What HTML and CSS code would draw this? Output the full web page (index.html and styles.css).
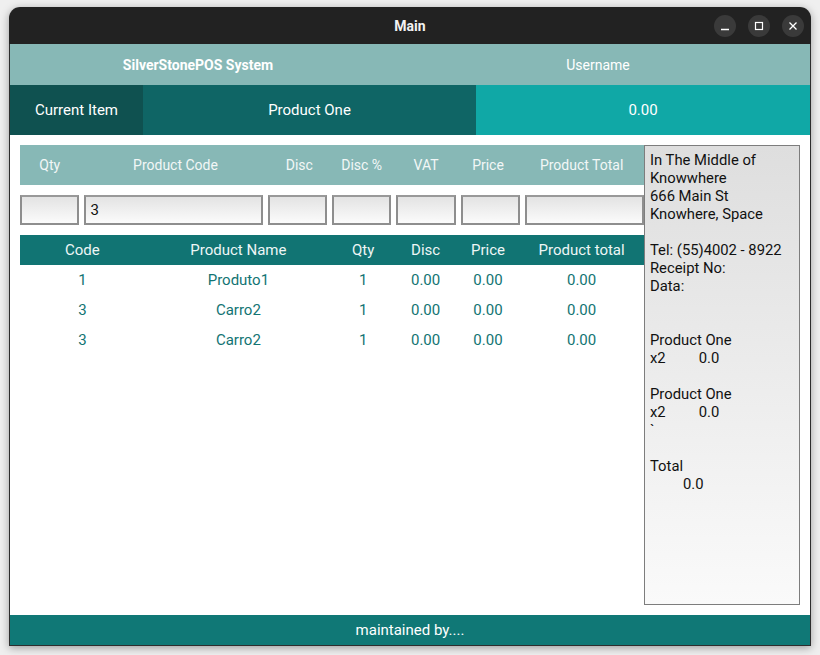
FILE: index.html
```html
<!DOCTYPE html>
<html>
<head>
<meta charset="utf-8">
<title>Main</title>
<link rel="stylesheet" href="styles.css">
</head>
<body>
<div class="window">
  <div class="titlebar">
    <span class="title">Main</span>
    <div class="controls">
      <span class="ctl"><svg width="10" height="10" viewBox="0 0 10 10"><path d="M1 8.5h8" stroke="#fff" stroke-width="1.3"/></svg></span>
      <span class="ctl"><svg width="10" height="10" viewBox="0 0 10 10"><rect x="1.5" y="1.5" width="7" height="7" fill="none" stroke="#fff" stroke-width="1.2"/></svg></span>
      <span class="ctl"><svg width="10" height="10" viewBox="0 0 10 10"><path d="M1.5 1.5l7 7M8.5 1.5l-7 7" stroke="#fff" stroke-width="1.3"/></svg></span>
    </div>
  </div>
  <div class="content">
    <div class="header">
      <div class="brand">SilverStonePOS System</div>
      <div class="user">Username</div>
    </div>
    <div class="current">
      <div class="cur-label">Current Item</div>
      <div class="cur-name">Product One</div>
      <div class="cur-price">0.00</div>
    </div>
    <div class="main">
      <div class="left">
        <div class="form-head grid7">
          <span>Qty</span><span>Product Code</span><span>Disc</span><span>Disc %</span><span>VAT</span><span>Price</span><span>Product Total</span>
        </div>
        <div class="form-inputs grid7">
          <div class="inp"></div>
          <div class="inp">3</div>
          <div class="inp"></div>
          <div class="inp"></div>
          <div class="inp"></div>
          <div class="inp"></div>
          <div class="inp"></div>
        </div>
        <div class="table">
          <div class="trow thead"><span>Code</span><span>Product Name</span><span>Qty</span><span>Disc</span><span>Price</span><span>Product total</span></div>
          <div class="trow"><span>1</span><span>Produto1</span><span>1</span><span>0.00</span><span>0.00</span><span>0.00</span></div>
          <div class="trow"><span>3</span><span>Carro2</span><span>1</span><span>0.00</span><span>0.00</span><span>0.00</span></div>
          <div class="trow"><span>3</span><span>Carro2</span><span>1</span><span>0.00</span><span>0.00</span><span>0.00</span></div>
        </div>
      </div>
      <div class="receipt">In The Middle of
Knowwhere
666 Main St
Knowhere, Space

Tel: (55)4002 - 8922
Receipt No:
Data:


Product One
x2         0.0

Product One
x2         0.0
`

Total
         0.0</div>
    </div>
    <div class="footer">maintained by....</div>
  </div>
</div>
</body>
</html>
```

FILE: styles.css
```css
* { box-sizing: border-box; }
html, body { margin: 0; padding: 0; }
body {
  background: #efefef;
  font-family: Roboto, "Liberation Sans", sans-serif;
  width: 820px;
  height: 655px;
  overflow: hidden;
  padding: 7px 0 0 9px;
}
.window {
  width: 802px;
  height: 639px;
  border-radius: 11px 11px 0 0;
  overflow: hidden;
  box-shadow: 0 2px 9px rgba(0,0,0,0.35);
  display: flex;
  flex-direction: column;
  background: #fff;
}
.titlebar {
  height: 37px;
  background: #222222;
  position: relative;
  display: flex;
  align-items: center;
  justify-content: center;
  flex-shrink: 0;
}
.title {
  color: #f2f2f2;
  font-weight: 700;
  font-size: 14px;
  padding-top: 1px;
}
.controls {
  position: absolute;
  right: 7px;
  top: 8px;
  display: flex;
  gap: 12px;
}
.ctl {
  width: 22px;
  height: 22px;
  border-radius: 50%;
  background: #3a3a3a;
  display: flex;
  align-items: center;
  justify-content: center;
}
.content {
  flex: 1;
  display: flex;
  flex-direction: column;
  border: 1px solid #2e2e2e;
  border-top: none;
}
.header {
  height: 41px;
  background: #87b8b6;
  display: flex;
  align-items: center;
  flex-shrink: 0;
}
.brand, .user {
  flex: 1;
  text-align: center;
  color: #fff;
  font-size: 14px;
}
.brand { font-weight: 700; padding-right: 24px; }
.user { padding-right: 24px; }
.current {
  height: 50px;
  display: flex;
  flex-shrink: 0;
  color: #fff;
  font-size: 15px;
}
.current > div {
  display: flex;
  align-items: center;
  justify-content: center;
}
.cur-label { width: 133px; background: #0f5150; }
.cur-name { width: 333px; background: #0f6565; }
.cur-price { flex: 1; background: #10a8a6; }
.main {
  flex: 1;
  display: flex;
  padding: 10px 9px 10px 10px;
}
.left {
  width: 624px;
  display: flex;
  flex-direction: column;
}
.grid7 {
  display: grid;
  grid-template-columns: 1fr 3fr 1fr 1fr 1fr 1fr 2fr;
  column-gap: 5px;
}
.form-head {
  height: 40px;
  background: #87b8b6;
  align-items: center;
  color: #f2f7f7;
  font-size: 14px;
  text-align: center;
}
.form-head span:nth-child(2) { padding-left: 4px; }
.form-head span:nth-child(3) { padding-left: 4px; }
.form-head span:nth-child(6) { padding-right: 5px; }
.form-head span:nth-child(7) { padding-right: 6px; }
.form-inputs {
  margin-top: 10px;
  height: 30px;
}
.inp {
  border: 2px solid #8e8e8e;
  border-top-color: #999;
  background: linear-gradient(#e3e3e3, #fbfbfb);
  font-size: 15px;
  color: #111;
  display: flex;
  align-items: center;
  padding-left: 4px;
}
.table { margin-top: 10px; }
.trow {
  display: grid;
  grid-template-columns: 2fr 3fr 1fr 1fr 1fr 2fr;
  height: 30px;
  align-items: center;
  text-align: center;
  font-size: 15px;
  color: #127473;
}
.thead {
  background: #117473;
  color: #eef6f6;
}
.receipt {
  width: 156px;
  border: 1px solid #7d7d7d;
  background: linear-gradient(#dedede, #fafafa);
  white-space: pre;
  font-size: 14.8px;
  line-height: 18px;
  color: #111;
  padding: 5px 0 0 5px;
  overflow: hidden;
}
.footer {
  height: 30px;
  background: #107876;
  color: #fff;
  font-size: 15px;
  display: flex;
  align-items: center;
  justify-content: center;
  flex-shrink: 0;
}
```
